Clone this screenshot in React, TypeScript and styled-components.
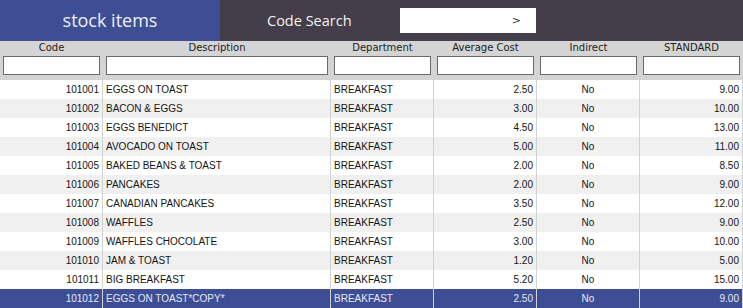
import React from "react";
import styled, { createGlobalStyle } from "styled-components";

interface StockItem {
    code: string;
    description: string;
    department: string;
    averageCost: string;
    indirect: string;
    standard: string;
}

const items: StockItem[] = [
    { code: "101001", description: "EGGS ON TOAST", department: "BREAKFAST", averageCost: "2.50", indirect: "No", standard: "9.00" },
    { code: "101002", description: "BACON & EGGS", department: "BREAKFAST", averageCost: "3.00", indirect: "No", standard: "10.00" },
    { code: "101003", description: "EGGS BENEDICT", department: "BREAKFAST", averageCost: "4.50", indirect: "No", standard: "13.00" },
    { code: "101004", description: "AVOCADO ON TOAST", department: "BREAKFAST", averageCost: "5.00", indirect: "No", standard: "11.00" },
    { code: "101005", description: "BAKED BEANS & TOAST", department: "BREAKFAST", averageCost: "2.00", indirect: "No", standard: "8.50" },
    { code: "101006", description: "PANCAKES", department: "BREAKFAST", averageCost: "2.00", indirect: "No", standard: "9.00" },
    { code: "101007", description: "CANADIAN PANCAKES", department: "BREAKFAST", averageCost: "3.50", indirect: "No", standard: "12.00" },
    { code: "101008", description: "WAFFLES", department: "BREAKFAST", averageCost: "2.50", indirect: "No", standard: "9.00" },
    { code: "101009", description: "WAFFLES CHOCOLATE", department: "BREAKFAST", averageCost: "3.00", indirect: "No", standard: "10.00" },
    { code: "101010", description: "JAM & TOAST", department: "BREAKFAST", averageCost: "1.20", indirect: "No", standard: "5.00" },
    { code: "101011", description: "BIG BREAKFAST", department: "BREAKFAST", averageCost: "5.20", indirect: "No", standard: "15.00" },
    { code: "101012", description: "EGGS ON TOAST*COPY*", department: "BREAKFAST", averageCost: "2.50", indirect: "No", standard: "9.00" },
];

const columns = ["Code", "Description", "Department", "Average Cost", "Indirect", "STANDARD"];
const selectedCode = "101012";

const GlobalStyle = createGlobalStyle`
    body {
        margin: 0;
        background: #ffffff;
    }
`;

const Page = styled.div`
    width: 743px;
    height: 308px;
    overflow: hidden;
    display: flex;
    flex-direction: column;
`;

const TopBar = styled.div`
    display: flex;
    height: 41px;
    background-color: #433e4a;
`;

const Title = styled.div`
    width: 220px;
    display: flex;
    align-items: center;
    justify-content: center;
    background-color: #3e4e94;
    color: #eceef8;
    font-family: "Open Sans", sans-serif;
    font-size: 18px;
    padding-bottom: 2px;
    box-sizing: border-box;
`;

const SearchLabel = styled.div`
    display: flex;
    align-items: center;
    margin-left: 47px;
    width: 133px;
    color: #f2f2f2;
    font-family: "Open Sans", sans-serif;
    font-size: 14.5px;
    padding-bottom: 1px;
`;

const SearchBox = styled.div`
    margin-top: 8px;
    width: 136px;
    height: 25px;
    background: #ffffff;
    display: flex;
    align-items: center;
    justify-content: flex-end;
    padding-right: 15px;
    box-sizing: border-box;
    color: #333;
    font-family: "DejaVu Sans", sans-serif;
    font-size: 11px;
`;

const grid = `
    display: grid;
    grid-template-columns: 103px 228px 103px 103px 103px 103px;
`;

const HeaderRow = styled.div`
    ${grid}
    background-color: #d4d4d4;
    padding-bottom: 5px;
`;

const HeaderCell = styled.div`
    display: flex;
    flex-direction: column;
    padding: 0 3px 0 3px;
`;

const HeaderLabel = styled.div`
    height: 13px;
    margin-bottom: 2px;
    text-align: center;
    font-family: "DejaVu Sans", sans-serif;
    font-size: 10px;
    line-height: 13px;
    color: #1e1e1e;
`;

const FilterInput = styled.div`
    height: 19px;
    box-sizing: border-box;
    background: #ffffff;
    border: 1px solid #6a6a6a;
`;

const Row = styled.div<{ $alt: boolean; $selected: boolean }>`
    ${grid}
    height: 19px;
    background-color: ${(p) => (p.$selected ? "#3e4e94" : p.$alt ? "#f0f0f0" : "#ffffff")};
    color: ${(p) => (p.$selected ? "#e6e8f4" : "#141414")};
`;

const Cell = styled.div<{ $align: "left" | "right" | "center" }>`
    border-right: 1px solid #d2d2d2;
    padding: 0 3px;
    text-align: ${(p) => p.$align};
    font-family: "Liberation Sans", Arial, sans-serif;
    font-size: 10px;
    line-height: 19px;
    white-space: nowrap;
    overflow: hidden;
`;

export default function App() {
    return (
        <Page>
            <GlobalStyle />
            <TopBar>
                <Title>stock items</Title>
                <SearchLabel>Code Search</SearchLabel>
                <SearchBox>&gt;</SearchBox>
            </TopBar>
            <HeaderRow>
                {columns.map((c) => (
                    <HeaderCell key={c}>
                        <HeaderLabel>{c}</HeaderLabel>
                        <FilterInput />
                    </HeaderCell>
                ))}
            </HeaderRow>
            {items.map((item, i) => (
                <Row key={item.code} $alt={i % 2 === 1} $selected={item.code === selectedCode}>
                    <Cell $align="right">{item.code}</Cell>
                    <Cell $align="left">{item.description}</Cell>
                    <Cell $align="left">{item.department}</Cell>
                    <Cell $align="right">{item.averageCost}</Cell>
                    <Cell $align="center">{item.indirect}</Cell>
                    <Cell $align="right">{item.standard}</Cell>
                </Row>
            ))}
        </Page>
    );
}
